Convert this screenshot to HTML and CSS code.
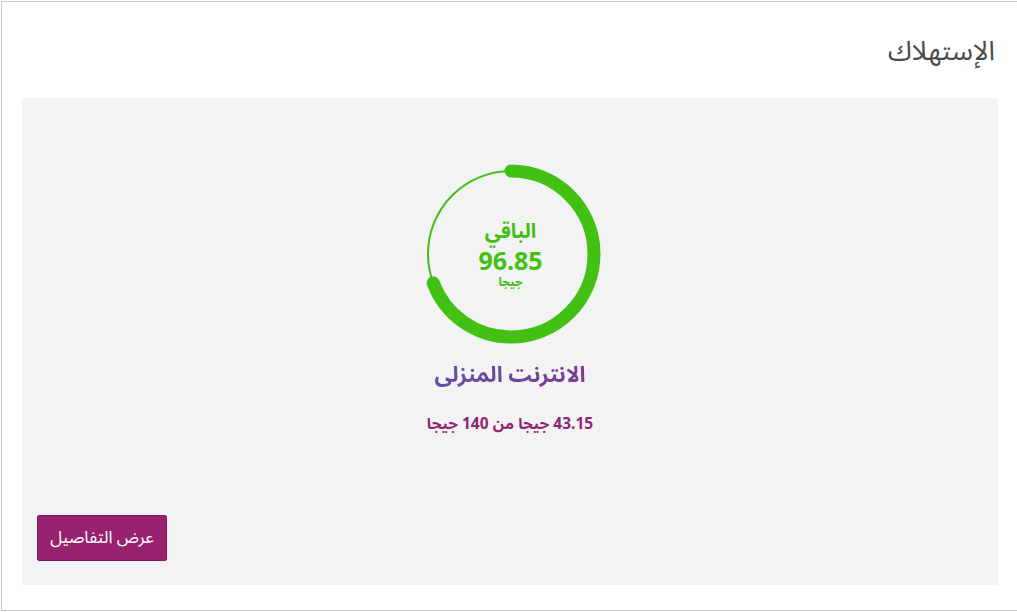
FILE: index.html
```html
<!DOCTYPE html>
<html lang="ar" dir="rtl">
<head>
<meta charset="utf-8">
<title>الإستهلاك</title>
<link rel="stylesheet" href="styles.css">
</head>
<body>
<section class="card">
  <header class="card-head">
    <h2 class="card-title">الإستهلاك</h2>
  </header>
  <div class="panel">
    <div class="gauge">
      <svg class="gauge-svg" width="184" height="184" viewBox="0 0 184 184">
        <circle cx="92" cy="92" r="83" fill="none" stroke="#42c014" stroke-width="2"/>
        <circle cx="92" cy="92" r="83" fill="none" stroke="#42c014" stroke-width="13" stroke-linecap="round"
          stroke-dasharray="361 1000" transform="rotate(-90 92 92)"/>
      </svg>
      <div class="gauge-text">
        <div class="gauge-label">الباقي</div>
        <div class="gauge-value">96.85</div>
        <div class="gauge-unit">جيجا</div>
      </div>
    </div>
    <div class="service-name">الانترنت المنزلي</div>
    <div class="usage">43.15 جيجا من 140 جيجا</div>
    <button class="details-btn" type="button">عرض التفاصيل</button>
  </div>
</section>
</body>
</html>
```
FILE: styles.css
```css
html, body {
  margin: 0;
  padding: 0;
  background: #fff;
  overflow: hidden;
}
body {
  direction: ltr;
  font-family: "Noto Sans", "Noto Sans Arabic", "DejaVu Sans", sans-serif;
}
.card {
  direction: rtl;
  box-sizing: border-box;
  width: 1018px;
  height: 610px;
  margin: 1px 0 0 1px;
  border: 1px solid #c9c9c9;
  padding: 0 20px 25px;
  display: flex;
  flex-direction: column;
}
.card-head {
  height: 96px;
  display: flex;
  align-items: center;
  padding-right: 3px;
}
.card-title {
  margin: 0;
  font-size: 27px;
  line-height: 36px;
  font-weight: 400;
  color: #4a4a4a;
}
.panel {
  flex: 1;
  background: #f3f3f3;
  display: flex;
  flex-direction: column;
  align-items: center;
  padding: 64px 15px 24px;
}
.gauge {
  display: grid;
  margin-left: 1px;
}
.gauge-svg,
.gauge-text {
  grid-area: 1 / 1;
}
.gauge-text {
  display: flex;
  flex-direction: column;
  align-items: center;
  justify-content: center;
  color: #42c014;
  font-weight: 700;
  padding-bottom: 2px;
}
.gauge-label {
  font-size: 20px;
  line-height: 26px;
}
.gauge-value {
  font-size: 25px;
  line-height: 26px;
  margin-top: 3px;
}
.gauge-unit {
  font-size: 12px;
  line-height: 14px;
  margin-top: 2px;
}
.service-name {
  margin-top: 12px;
  font-size: 22px;
  line-height: 30px;
  font-weight: 700;
  background: linear-gradient(90deg, #5e54a0, #7e3c97);
  -webkit-background-clip: text;
  background-clip: text;
  color: transparent;
}
.usage {
  margin-top: 24px;
  font-size: 15.5px;
  line-height: 22px;
  font-weight: 700;
  color: #8f2672;
}
.details-btn {
  margin-top: auto;
  align-self: flex-end;
  width: 130px;
  height: 46px;
  padding: 0;
  border: 1px solid #7e1a60;
  border-radius: 2px;
  background: #98226f;
  color: #fff;
  font-family: inherit;
  font-size: 17px;
}
```
